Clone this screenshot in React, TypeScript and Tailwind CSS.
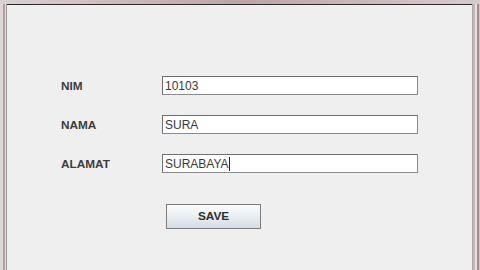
import React from "react";

const Field = ({ value, caret }: { value: string; caret?: boolean }) => (
  <div className="w-[256px] h-[19px] bg-white border border-[#8a8a8a] border-t-[#6f6f6f] border-l-[#6f6f6f] flex items-center pl-[2px] text-[12px] text-[#3a3a3a] leading-none">
    <span>{value}</span>
    {caret && <span className="inline-block w-px h-[14px] bg-[#222]" />}
  </div>
);

const Row = ({ label, value, caret }: { label: string; value: string; caret?: boolean }) => (
  <div className="flex items-center h-[19px]">
    <div className="w-[101px] pt-[2px] text-[11.8px] font-bold text-[#3c3c3c]">{label}</div>
    <Field value={value} caret={caret} />
  </div>
);

export default function App() {
  return (
    <div
      className="w-[480px] h-[270px] overflow-hidden bg-gradient-to-r from-[#cfc6c7] via-[#c2adb0] to-[#cbbcbe] flex flex-col"
      style={{ fontFamily: '"Liberation Sans", Arial, sans-serif' }}
    >
      <div className="h-[4px] shrink-0 bg-gradient-to-r from-[#d8d2d2] via-[#bfa2a6] to-[#d5cccd]" />
      <div className="flex flex-1 min-h-0">
        <div className="w-[7px] shrink-0 flex">
          <div className="w-[3px] bg-[#dcd6d7]" />
          <div className="w-[2px] bg-[#b59ea2]" />
          <div className="w-[1px] bg-[#e6e0e1]" />
          <div className="w-[1px] bg-[#9a9a9a]" />
        </div>
        <div className="flex-1 bg-[#efefef] border-t border-[#2a2a2a] pl-[54px] pt-[71px]">
          <div className="flex flex-col gap-[20px]">
            <Row label="NIM" value="10103" />
            <Row label="NAMA" value="SURA" />
            <Row label="ALAMAT" value="SURABAYA" caret />
          </div>
          <div className="mt-[31px] ml-[105px] w-[95px] h-[25px] border border-[#7d7d7d] bg-gradient-to-b from-[#fbfbfb] via-[#e9eef2] to-[#d2dde6] flex items-center justify-center text-[11.8px] font-bold text-[#2e2e2e]">
            SAVE
          </div>
        </div>
        <div className="w-[8px] shrink-0 flex">
          <div className="w-[1px] bg-[#a8a8a8]" />
          <div className="w-[2px] bg-[#c9b6b9]" />
          <div className="w-[2px] bg-[#e7e1e2]" />
          <div className="w-[2px] bg-[#a48c90]" />
          <div className="w-[1px] bg-[#d0c4c6]" />
        </div>
      </div>
    </div>
  );
}
